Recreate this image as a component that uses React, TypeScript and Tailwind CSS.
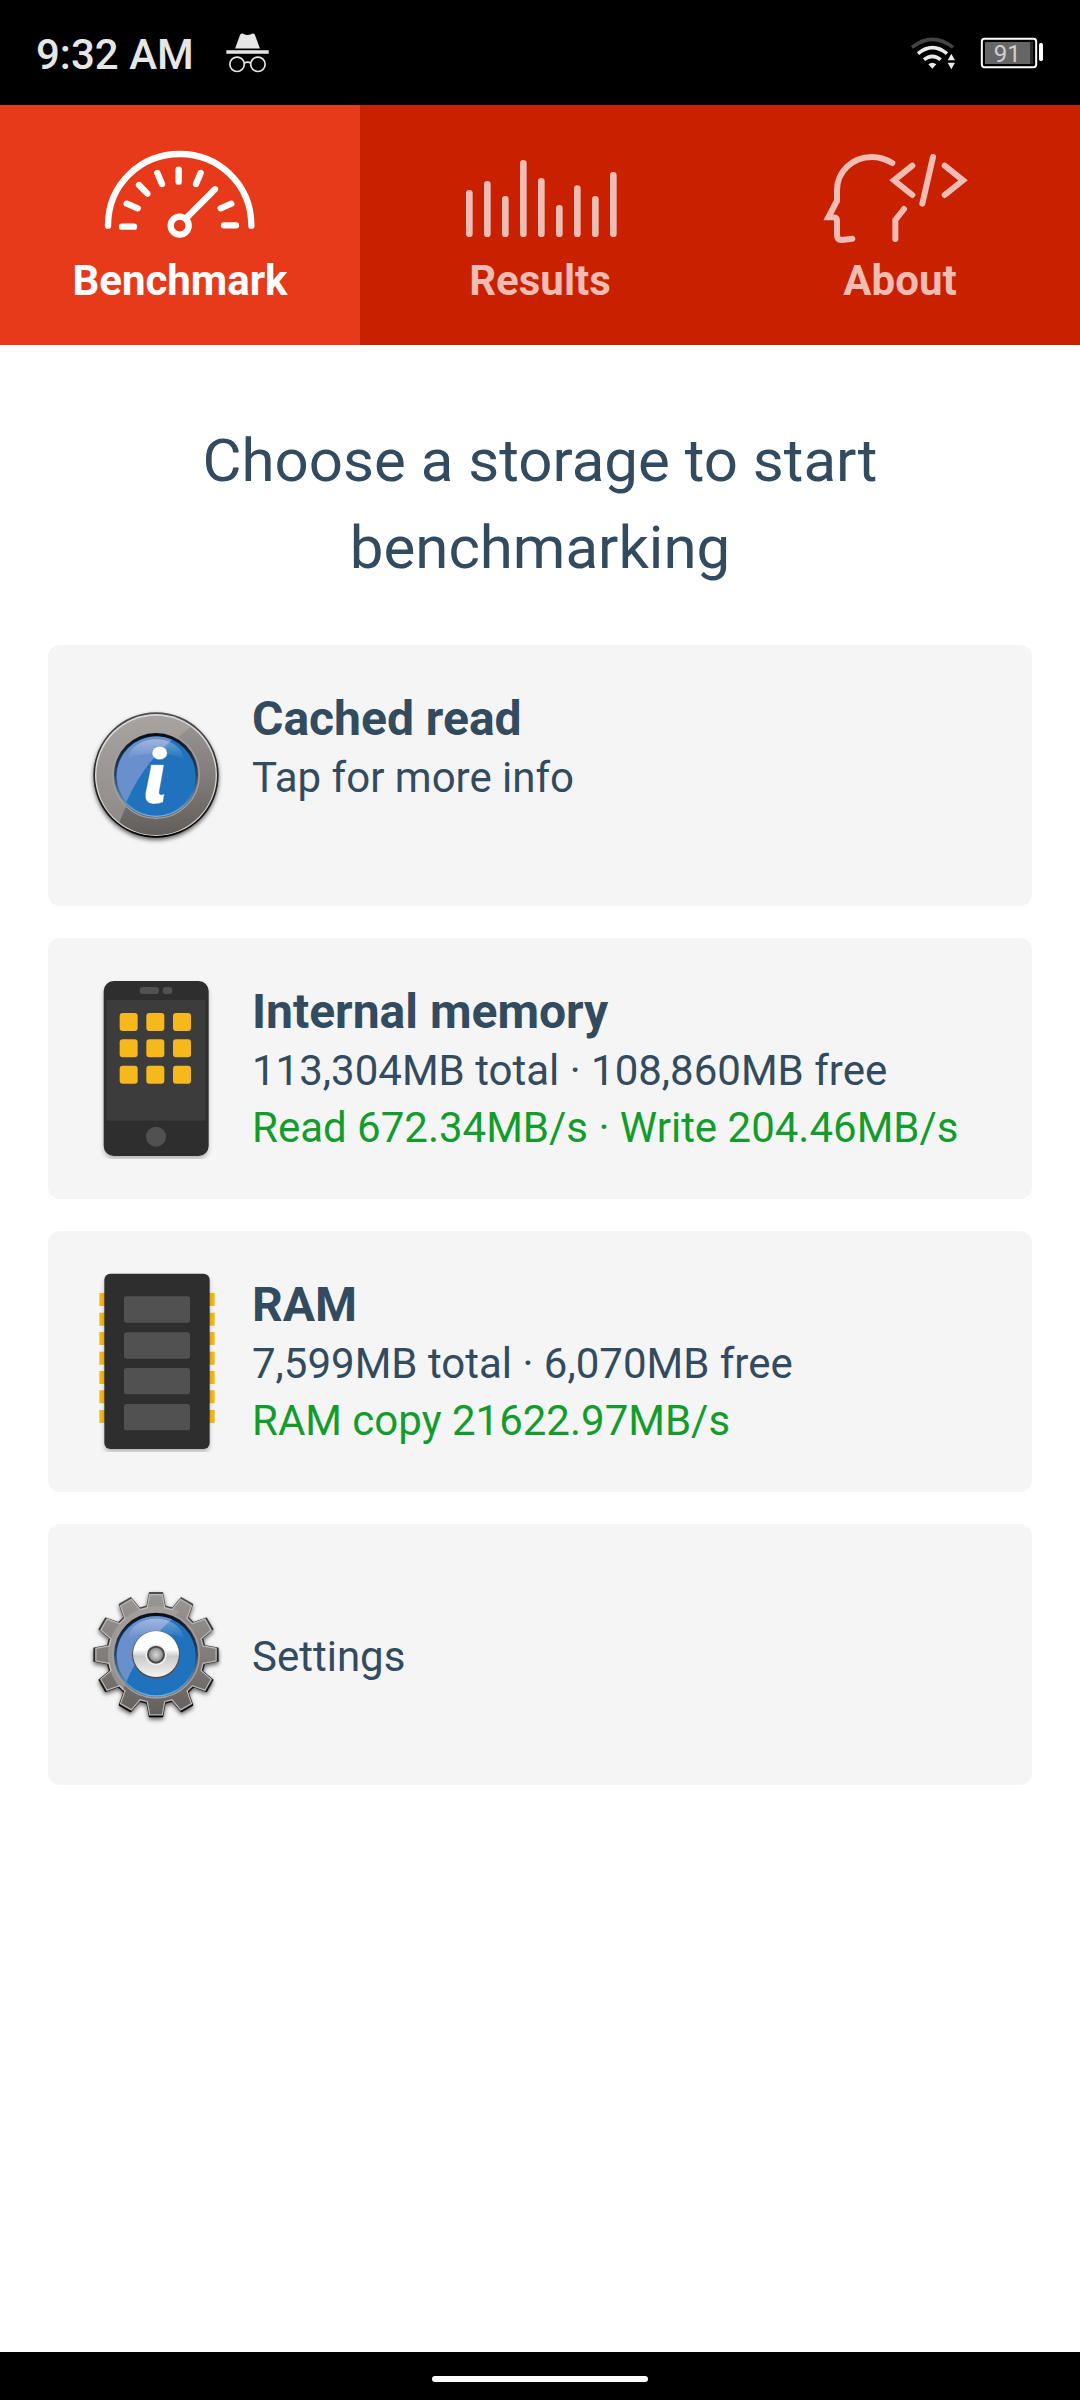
import type { ReactNode } from "react"
import clsx from "clsx"

const GEAR_TEETH = Array.from({ length: 12 }, (_, i) => i * 30)

// outline of the gear, one tooth every 30 degrees
function gearPath(cx: number, cy: number) {
    const points: string[] = []
    const corners = [
        [-10.5, 148],
        [-6, 187],
        [6, 187],
        [10.5, 148],
    ]
    for (const tooth of GEAR_TEETH) {
        for (const [deg, radius] of corners) {
            const rad = ((tooth + deg) * Math.PI) / 180
            points.push(`${(cx + radius * Math.sin(rad)).toFixed(1)},${(cy - radius * Math.cos(rad)).toFixed(1)}`)
        }
    }
    return `M${points.join("L")}Z`
}

function IncognitoIcon() {
    return (
        <svg viewBox="680 96 128 128" className="h-[43px] w-[43px]" fill="#e6e6e6">
            <path d="M707 148L722 107Q725 102 731 104Q744 112 757 104Q763 102 766 107L781 148Z" />
            <path d="M681 153h126v11h-126z" />
            <g fill="none" stroke="#e6e6e6" strokeWidth="5">
                <circle cx="713" cy="195" r="21.500" />
                <circle cx="775" cy="195" r="21.500" />
                <path d="M734 192Q744 185 754 192" />
            </g>
        </svg>
    )
}

function WifiIcon() {
    return (
        <svg viewBox="150 96 138 120" className="h-10 w-[46px]" fill="none" strokeWidth="11">
            <path d="M156 139Q217 91 279 139" stroke="#444" />
            <path d="M174 158Q217 122 261 158" stroke="#ebebeb" />
            <path d="M192 176Q217 156 242 176" stroke="#ebebeb" />
            <path d="M205 190Q217 181 229 190L217 203Z" fill="#ebebeb" />
            <path d="M263 178L274 158L285 178ZM263 185L274 205L285 185Z" fill="#ebebeb" />
        </svg>
    )
}

function BatteryIcon() {
    return (
        <svg viewBox="360 96 192 120" className="h-10 w-16">
            <rect x="365.500" y="113.500" width="163" height="85" rx="8" fill="none" stroke="#fff" strokeWidth="6" />
            <rect x="375" y="123" width="144" height="66" fill="#2b2b2b" />
            <rect x="375" y="123" width="135" height="66" fill="#666" />
            <rect x="537" y="126" width="12" height="54" rx="5" fill="#fff" />
            <text x="442" y="183" textAnchor="middle" fontSize="72" fill="#d0d0d0">
                91
            </text>
        </svg>
    )
}

function GaugeIcon() {
    return (
        <svg viewBox="180 111 720 360" className="h-[120px] w-60" fill="none" stroke="currentColor" strokeWidth="19" strokeLinecap="round">
            <path d="M324 377C324 250 425 162 539 162S754 250 754 377" />
            <path d="M366 380h36M380 311L413 325M417 255L442 281M472 219L486 252M536 209V245M602 219L588 252M694 311L662 325M672 376h36" />
            <path d="M645 268L562 351" />
            <circle cx="539" cy="377" r="27" />
        </svg>
    )
}

function BarsIcon() {
    return (
        <svg viewBox="0 21 720 360" className="h-[120px] w-60" fill="none" stroke="currentColor" strokeWidth="20" strokeLinecap="round">
            <path d="M148 190V311M202 163V311M256 208V311M310 100V311M364 154V311M418 235V311M472 176V311M526 208V311M580 136V311" />
        </svg>
    )
}

function HeadCodeIcon() {
    return (
        <svg viewBox="0 21 720 360" className="h-[120px] w-60" fill="none" stroke="currentColor" strokeWidth="18" strokeLinecap="round">
            <path d="M337 99C313 85 293 81 276 81C217 81 171 125 171 181V212L145 262H160Q171 262 171 273V314Q171 330 185 330L217 326" />
            <path d="M397 107L342 151L397 195M459 81L427 221M494 107L549 151L494 195" />
            <path d="M372 237L346 270V327" />
        </svg>
    )
}

// blue glass disc shared by the info and the gear icon
function GlassDisc({ cy }: { cy: number }) {
    return (
        <>
            <circle cx="270" cy={cy} r="130" fill="none" stroke="#a89d98" strokeWidth="4" />
            <circle cx="270" cy={cy} r="126" fill="url(#discRim)" />
            <circle cx="270" cy={cy + 3} r="119" fill="#2172bd" />
            <path d={`M181 ${cy + 81}A119 119 0 0 1 318 ${cy - 106}Q230 ${cy - 30} 181 ${cy + 81}Z`} fill="#6a8fcd" />
            <path d={`M186 ${cy - 46}C196 ${cy - 128} 344 ${cy - 128} 354 ${cy - 46}C330 ${cy - 70} 210 ${cy - 70} 186 ${cy - 46}Z`} fill="url(#discGloss)" />
        </>
    )
}

function SharedDefs() {
    return (
        <svg className="absolute h-0 w-0" aria-hidden="true">
            <defs>
                <linearGradient id="metal" x1="0" y1="0" x2="0" y2="1">
                    <stop offset="0" stopColor="#9b9795" />
                    <stop offset="0.500" stopColor="#827d7a" />
                    <stop offset="1" stopColor="#615e5c" />
                </linearGradient>
                <linearGradient id="edge" x1="0" y1="0" x2="0" y2="1">
                    <stop offset="0" stopColor="#4b5055" />
                    <stop offset="1" stopColor="#050505" />
                </linearGradient>
                <linearGradient id="metalShine" x1="0" y1="0" x2="0" y2="1">
                    <stop offset="0" stopColor="#fff" stopOpacity="0.120" />
                    <stop offset="1" stopColor="#fff" stopOpacity="0.250" />
                </linearGradient>
                <linearGradient id="discRim" x1="0" y1="0" x2="0" y2="1">
                    <stop offset="0" stopColor="#0a0d12" />
                    <stop offset="0.500" stopColor="#27466b" />
                    <stop offset="1" stopColor="#63baf0" />
                </linearGradient>
                <linearGradient id="discGloss" x1="0" y1="0" x2="0" y2="1">
                    <stop offset="0" stopColor="#fff" stopOpacity="0.350" />
                    <stop offset="1" stopColor="#fff" stopOpacity="0" />
                </linearGradient>
                <linearGradient id="hub" x1="0" y1="0" x2="0" y2="1">
                    <stop offset="0.400" stopColor="#fff" />
                    <stop offset="0.550" stopColor="#c9c9c9" />
                    <stop offset="1" stopColor="#f4f4f4" />
                </linearGradient>
                <radialGradient id="hubHole">
                    <stop offset="0" stopColor="#d8d8d8" />
                    <stop offset="1" stopColor="#858585" />
                </radialGradient>
                <filter id="softShadow" x="-20%" y="-20%" width="140%" height="140%">
                    <feDropShadow dx="0" dy="7" stdDeviation="7" floodColor="#000" floodOpacity="0.600" />
                </filter>
                <filter id="lightShadow" x="-20%" y="-20%" width="140%" height="140%">
                    <feDropShadow dx="0" dy="9" stdDeviation="6" floodColor="#000" floodOpacity="0.250" />
                </filter>
            </defs>
        </svg>
    )
}

function InfoIcon() {
    return (
        <svg viewBox="0 0 540 543" className="h-[181px] w-[180px] shrink-0" aria-hidden="true">
            <circle cx="270" cy="270" r="188" fill="url(#edge)" filter="url(#softShadow)" />
            <circle cx="270" cy="270" r="183" fill="#d6d4d3" />
            <circle cx="270" cy="271" r="179" fill="url(#metal)" />
            <path d="M160 412A179 179 0 0 1 374 125Q220 250 160 412Z" fill="url(#metalShine)" />
            <GlassDisc cy={270} />
            <g fill="#fff" stroke="#2f62a8" strokeOpacity="0.350" strokeWidth="3">
                <ellipse cx="281" cy="204" rx="23" ry="20" />
                <path d="M255 239H294L280 319Q278 331 287 329L295 327L291 352Q277 358 261 357Q235 354 238 326L250 268L253 251Z" />
            </g>
        </svg>
    )
}

function PhoneIcon() {
    return (
        <svg viewBox="0 0 540 543" className="h-[181px] w-[180px] shrink-0" aria-hidden="true">
            <rect x="113" y="9" width="315" height="525" rx="30" fill="#2e2e2e" filter="url(#lightShadow)" />
            <rect x="122" y="66" width="296" height="362" fill="#3c3c3c" />
            <rect x="221" y="27" width="58" height="21" rx="10" fill="#515151" />
            <rect x="290" y="27" width="29" height="21" rx="10" fill="#515151" />
            <circle cx="270" cy="476" r="30" fill="#515151" />
            {[105, 184, 263].map((y) =>
                [161, 241, 321].map((x) => <rect key={`${x}-${y}`} x={x} y={y} width="54" height="54" rx="9" fill="#f6b81a" />)
            )}
        </svg>
    )
}

function ChipIcon() {
    return (
        <svg viewBox="0 0 540 543" className="h-[181px] w-[180px] shrink-0" aria-hidden="true">
            {[66, 125, 183, 242, 300, 358, 417].map((y) => (
                <path key={y} d={`M100 ${y}h346v39h-346z`} fill="#f6b81a" />
            ))}
            <rect x="115" y="8" width="316" height="526" rx="18" fill="#2e2e2e" filter="url(#lightShadow)" />
            {[76, 184, 291, 399].map((y) => (
                <rect key={y} x="174" y={y} width="198" height="79" rx="8" fill="#515151" />
            ))}
        </svg>
    )
}

function GearIcon() {
    return (
        <svg viewBox="0 0 540 543" className="h-[181px] w-[180px] shrink-0" aria-hidden="true">
            <path d={gearPath(270, 272)} fill="url(#edge)" stroke="url(#edge)" strokeWidth="4" strokeLinejoin="round" filter="url(#softShadow)" />
            <g transform="translate(270 272) scale(0.970) translate(-270 -272)">
                <path d={gearPath(270, 272)} fill="url(#metal)" stroke="#b9b6b4" strokeWidth="4" />
            </g>
            <path d="M170 380A148 148 0 0 1 340 142Q220 240 170 380Z" fill="url(#metalShine)" />
            <GlassDisc cy={272} />
            <circle cx="270" cy="272" r="72" fill="#574f49" />
            <circle cx="270" cy="270" r="69" fill="url(#hub)" />
            <circle cx="270" cy="272" r="32" fill="#efefef" />
            <circle cx="270" cy="272" r="24" fill="url(#hubHole)" stroke="#4a4a4a" strokeWidth="6" />
        </svg>
    )
}

const tabs = [
    { label: "Benchmark", icon: <GaugeIcon />, active: true },
    { label: "Results", icon: <BarsIcon />, active: false },
    { label: "About", icon: <HeadCodeIcon />, active: false },
]

type StorageCardProps = {
    icon: ReactNode
    title?: string
    detail: string
    result?: string
}

function StorageCard({ icon, title, detail, result }: StorageCardProps) {
    return (
        <button type="button" className="flex w-full rounded-xl bg-[#f5f5f5] px-[18px] py-10 text-left">
            {icon}
            <span className={clsx("flex min-w-0 flex-col pt-1 pl-1.5", !title && "self-center")}>
                {title && <span className="text-[48px] leading-[60px] font-bold">{title}</span>}
                <span className="text-[42px] leading-[57px]">{detail}</span>
                {result && <span className="text-[42px] leading-[57px] text-[#119c2b]">{result}</span>}
            </span>
        </button>
    )
}

export default function App() {
    return (
        <div className="flex min-h-screen flex-col bg-white font-[Roboto,sans-serif] text-[#324b5f]">
            <SharedDefs />

            {/* Status bar */}
            <header className="flex h-[105px] items-center justify-between bg-black px-9 text-[#e6e6e6]">
                <div className="flex items-center gap-8">
                    <span className="pt-1 text-[42px] leading-[48px] font-medium">9:32 AM</span>
                    <IncognitoIcon />
                </div>
                <div className="flex items-center gap-6">
                    <WifiIcon />
                    <BatteryIcon />
                </div>
            </header>

            {/* Tabs */}
            <nav role="tablist" className="grid grid-cols-3 bg-[#c92100]">
                {tabs.map((tab) => (
                    <button
                        key={tab.label}
                        type="button"
                        role="tab"
                        aria-selected={tab.active}
                        className={clsx(
                            "flex flex-col items-center pt-8 pb-10 text-[42px] leading-[48px] font-bold",
                            tab.active ? "bg-[#e73a1a] text-white" : "text-[#f0bcb3]"
                        )}
                    >
                        {tab.icon}
                        {tab.label}
                    </button>
                ))}
            </nav>

            <main className="flex grow flex-col px-12">
                <h1 className="px-24 pt-[72px] pb-[54px] text-center text-[60px] leading-[87px]">Choose a storage to start benchmarking</h1>
                <div className="flex flex-col gap-8">
                    <StorageCard icon={<InfoIcon />} title="Cached read" detail="Tap for more info" />
                    <StorageCard
                        icon={<PhoneIcon />}
                        title="Internal memory"
                        detail="113,304MB total · 108,860MB free"
                        result="Read 672.34MB/s · Write 204.46MB/s"
                    />
                    <StorageCard icon={<ChipIcon />} title="RAM" detail="7,599MB total · 6,070MB free" result="RAM copy 21622.97MB/s" />
                    <StorageCard icon={<GearIcon />} detail="Settings" />
                </div>
            </main>

            {/* Gesture bar */}
            <footer className="flex h-12 items-start justify-center bg-black pt-6">
                <div className="h-1.5 w-1/5 rounded-full bg-white" />
            </footer>
        </div>
    )
}
